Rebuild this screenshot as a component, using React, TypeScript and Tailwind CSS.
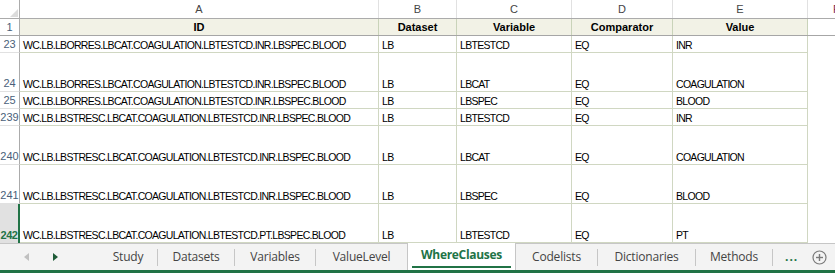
import React from 'react';

type Row = { n: string; h: string; cells: string[]; selected?: boolean };

const rows: Row[] = [
  { n: '23', h: 'h-[17px]', cells: ['WC.LB.LBORRES.LBCAT.COAGULATION.LBTESTCD.INR.LBSPEC.BLOOD', 'LB', 'LBTESTCD', 'EQ', 'INR'] },
  { n: '24', h: 'h-[39px]', cells: ['WC.LB.LBORRES.LBCAT.COAGULATION.LBTESTCD.INR.LBSPEC.BLOOD', 'LB', 'LBCAT', 'EQ', 'COAGULATION'] },
  { n: '25', h: 'h-[17px]', cells: ['WC.LB.LBORRES.LBCAT.COAGULATION.LBTESTCD.INR.LBSPEC.BLOOD', 'LB', 'LBSPEC', 'EQ', 'BLOOD'] },
  { n: '239', h: 'h-[17px]', cells: ['WC.LB.LBSTRESC.LBCAT.COAGULATION.LBTESTCD.INR.LBSPEC.BLOOD', 'LB', 'LBTESTCD', 'EQ', 'INR'] },
  { n: '240', h: 'h-[39px]', cells: ['WC.LB.LBSTRESC.LBCAT.COAGULATION.LBTESTCD.INR.LBSPEC.BLOOD', 'LB', 'LBCAT', 'EQ', 'COAGULATION'] },
  { n: '241', h: 'h-[39px]', cells: ['WC.LB.LBSTRESC.LBCAT.COAGULATION.LBTESTCD.INR.LBSPEC.BLOOD', 'LB', 'LBSPEC', 'EQ', 'BLOOD'] },
  { n: '242', h: 'h-[39px]', cells: ['WC.LB.LBSTRESC.LBCAT.COAGULATION.LBTESTCD.PT.LBSPEC.BLOOD', 'LB', 'LBTESTCD', 'EQ', 'PT'], selected: true },
];

const colW = ['w-[359px]', 'w-[78px]', 'w-[115px]', 'w-[101px]', 'w-[135px]'];
const letters = ['A', 'B', 'C', 'D', 'E'];
const headers = ['ID', 'Dataset', 'Variable', 'Comparator', 'Value'];

const tabs = [
  { name: 'Study', w: 'w-[58px]' },
  { name: 'Datasets', w: 'w-[77px]' },
  { name: 'Variables', w: 'w-[81px]' },
  { name: 'ValueLevel', w: 'w-[92px]' },
  { name: 'WhereClauses', w: 'w-[109px]', active: true },
  { name: 'Codelists', w: 'w-[81px]' },
  { name: 'Dictionaries', w: 'w-[98px]' },
  { name: 'Methods', w: 'w-[77px]' },
];

const App: React.FC = () => {
  return (
    <div className="w-[835px] h-[273px] overflow-hidden bg-white flex flex-col font-['Liberation_Sans',Arial,sans-serif]">
      {/* grid */}
      <div className="h-[243px] flex flex-col">
        {/* column letters */}
        <div className="flex h-[19px] border-b border-[#ababab] text-[11px] text-[#444]">
          <div className="w-[20px] shrink-0 border-r border-[#ababab] relative">
            <svg className="absolute left-[10px] top-[9px]" width="8" height="8" viewBox="0 0 8 8">
              <polygon points="8,0 8,8 0,8" fill="#dcdcdc" />
            </svg>
          </div>
          {letters.map((l, i) => (
            <div key={l} className={`${colW[i]} shrink-0 border-r border-[#e1e1e1] flex items-center justify-center`}>
              {l}
            </div>
          ))}
          <div className="flex-1 flex items-center pl-[25px] text-[#7a2a4a]">F</div>
        </div>

        {/* header row 1 */}
        <div className="flex h-[17px] border-b border-[#a6a6a6] text-[11px]">
          <div className="w-[20px] shrink-0 border-r border-[#ababab] flex items-center justify-center text-[#4a5f7a]">1</div>
          {headers.map((hd, i) => (
            <div key={hd} className={`${colW[i]} shrink-0 border-r border-[#c9d3b9] bg-[#f2f2e6] flex items-center justify-center font-bold text-black`}>
              {hd}
            </div>
          ))}
          <div className="flex-1" />
        </div>

        {/* data rows */}
        {rows.map(r => (
          <div key={r.n} className={`flex ${r.h} shrink-0`}>
            <div
              className={`w-[20px] shrink-0 flex items-end justify-center pb-[2px] leading-none text-[11px] ${
                r.selected
                  ? 'bg-[#e1e1e1] border-r-2 border-[#217346] text-[#217346] font-bold tracking-[-0.5px]'
                  : 'border-r border-b border-r-[#ababab] border-b-[#e1e1e1] text-[#4a5f7a]'
              }`}
            >
              {r.n}
            </div>
            {r.cells.map((c, i) => (
              <div
                key={i}
                className={`${colW[i]} shrink-0 border-r border-b border-[#d0d7c2] flex items-end pl-[3px] pb-[2px] leading-none text-[10.5px] tracking-[-0.7px] text-black whitespace-nowrap overflow-hidden`}
              >
                {c}
              </div>
            ))}
            <div className="flex-1" />
          </div>
        ))}
      </div>

      {/* sheet tabs */}
      <div className="h-[27px] bg-[#f3f3f3] flex items-stretch font-['Open_Sans','Noto_Sans',sans-serif] text-[12px] text-[#444]">
        <div className="w-[99px] shrink-0 flex items-center border-t border-[#c6c6c6]">
          <svg className="ml-[24px]" width="5" height="8" viewBox="0 0 5 8">
            <polygon points="5,0 5,8 0,4" fill="#c0c0c0" />
          </svg>
          <svg className="ml-[24px]" width="5" height="8" viewBox="0 0 5 8">
            <polygon points="0,0 0,8 5,4" fill="#1e5b37" />
          </svg>
        </div>
        {tabs.map((t, i) => {
          if (t.active) {
            return (
              <div
                key={t.name}
                className={`${t.w} shrink-0 bg-white border-x border-[#c6c6c6] flex flex-col`}
              >
                <div className="flex-1 flex items-center justify-center font-bold text-[#217346] tracking-[-0.3px]">
                  {t.name}
                </div>
                <div className="h-[2px] mx-[4px] bg-[#217346] mb-[2px]" />
              </div>
            );
          }
          return (
            <div key={t.name} className={`${t.w} shrink-0 flex items-center border-t border-[#c6c6c6]`}>
              {i > 0 && !tabs[i - 1].active && <div className="w-px h-[17px] bg-[#c6c6c6]" />}
              <div className="flex-1 text-center tracking-[-0.2px]">{t.name}</div>
            </div>
          );
        })}
        <div className="flex-1 flex items-center border-t border-[#c6c6c6]">
          <div className="w-px h-[17px] bg-[#c6c6c6]" />
          <span className="ml-[12px] text-[#217346] font-bold tracking-[1px]">...</span>
          <svg className="ml-[14px]" width="15" height="15" viewBox="0 0 15 15">
            <circle cx="7.5" cy="7.5" r="6.5" fill="none" stroke="#7a7a7a" strokeWidth="1.2" />
            <line x1="7.5" y1="4" x2="7.5" y2="11" stroke="#7a7a7a" strokeWidth="1.4" />
            <line x1="4" y1="7.5" x2="11" y2="7.5" stroke="#7a7a7a" strokeWidth="1.4" />
          </svg>
        </div>
      </div>
      <div className="h-[3px] bg-[#217346]" />
    </div>
  );
};

export default App;
